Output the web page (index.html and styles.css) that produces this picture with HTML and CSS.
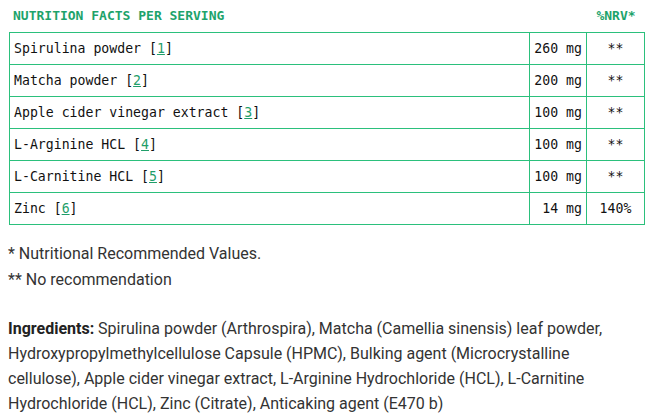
FILE: index.html
```html
<!DOCTYPE html>
<html>
<head>
<meta charset="utf-8">
<link rel="stylesheet" href="styles.css">
</head>
<body>
<div class="wrap">
  <div class="facts-head">
    <span class="facts-title">NUTRITION FACTS PER SERVING</span>
    <span class="facts-nrv">%NRV*</span>
  </div>
  <table class="facts">
    <tr><td class="name">Spirulina powder [<a href="#">1</a>]</td><td class="amt">260 mg</td><td class="nrv">**</td></tr>
    <tr><td class="name">Matcha powder [<a href="#">2</a>]</td><td class="amt">200 mg</td><td class="nrv">**</td></tr>
    <tr><td class="name">Apple cider vinegar extract [<a href="#">3</a>]</td><td class="amt">100 mg</td><td class="nrv">**</td></tr>
    <tr><td class="name">L-Arginine HCL [<a href="#">4</a>]</td><td class="amt">100 mg</td><td class="nrv">**</td></tr>
    <tr><td class="name">L-Carnitine HCL [<a href="#">5</a>]</td><td class="amt">100 mg</td><td class="nrv">**</td></tr>
    <tr><td class="name">Zinc [<a href="#">6</a>]</td><td class="amt">14 mg</td><td class="nrv">140%</td></tr>
  </table>
  <div class="notes">
    <p>* Nutritional Recommended Values.</p>
    <p>** No recommendation</p>
  </div>
  <p class="ingredients"><strong>Ingredients:</strong> Spirulina powder (Arthrospira), Matcha (Camellia sinensis) leaf powder, Hydroxypropylmethylcellulose Capsule (HPMC), Bulking agent (Microcrystalline cellulose), Apple cider vinegar extract, L-Arginine Hydrochloride (HCL), L-Carnitine Hydrochloride (HCL), Zinc (Citrate), Anticaking agent (E470 b)</p>
</div>
</body>
</html>
```

FILE: styles.css
```css
html, body {
  margin: 0;
  padding: 0;
  background: #fff;
}
body {
  padding: 0 6px 0 8px;
  font-family: Roboto, "Liberation Sans", sans-serif;
  font-size: 16px;
  line-height: 25.5px;
  color: #333;
}
.wrap {
  width: 637px;
}
.facts-head {
  display: flex;
  align-items: center;
  height: 32px;
  font-family: "DejaVu Sans Mono", monospace;
  font-weight: bold;
  font-size: 13px;
  color: #1da36b;
}
.facts-title {
  flex: 1;
  padding-left: 5px;
}
.facts-nrv {
  width: 58px;
  text-align: center;
}
.facts {
  margin-left: 1px;
  width: 636px;
  border-collapse: collapse;
  font-family: "DejaVu Sans Mono", monospace;
  font-size: 13.2px;
  color: #111;
}
.facts td {
  border: 1px solid #2bc07c;
  height: 32px;
  padding: 0 4px;
  line-height: 16px;
  vertical-align: middle;
  box-sizing: border-box;
}
.facts .amt {
  width: 57px;
  text-align: right;
  white-space: nowrap;
}
.facts .nrv {
  width: 58px;
  text-align: center;
}
.facts a {
  color: #1f9e69;
  text-decoration: underline;
}
.notes {
  margin-top: 16px;
}
.notes p {
  margin: 0;
}
.ingredients {
  margin: 24px 0 0;
  line-height: 25px;
}
.ingredients strong {
  font-weight: bold;
  color: #222;
}
```
